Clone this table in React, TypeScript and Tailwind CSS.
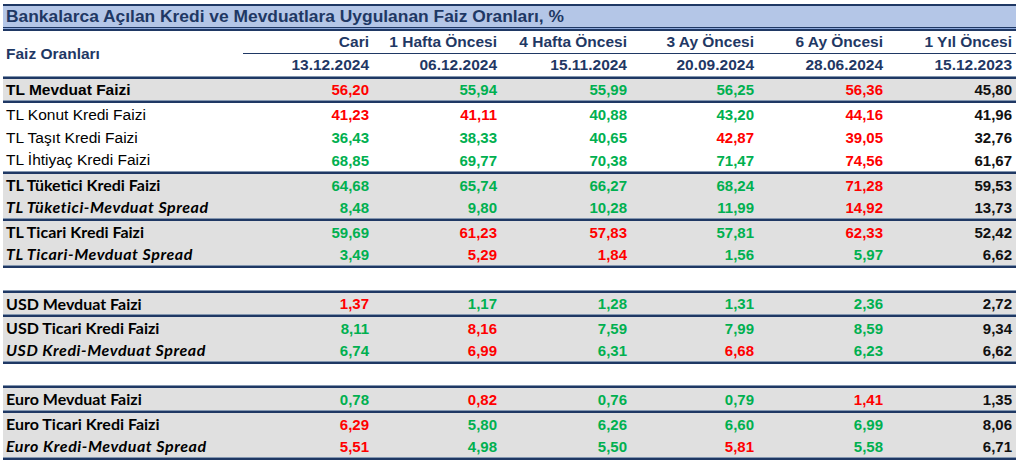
import React from "react";

type C = "r" | "g" | "k";

interface Row {
  label: string;
  font: "arialBold" | "arial" | "cal" | "calItalic";
  gray: boolean;
  h: string;
  vals: [string, C][];
}

const COLS = ["Cari", "1 Hafta Öncesi", "4 Hafta Öncesi", "3 Ay Öncesi", "6 Ay Öncesi", "1 Yıl Öncesi"];
const DATES = ["13.12.2024", "06.12.2024", "15.11.2024", "20.09.2024", "28.06.2024", "15.12.2023"];
const WIDTHS = ["w-[130px]", "w-[128px]", "w-[130px]", "w-[127px]", "w-[129px]", "w-[129px]"];

const colorClass: Record<C, string> = {
  r: "text-[#ff0000]",
  g: "text-[#00b050]",
  k: "text-[#111111]",
};

const labelClass = {
  arialBold: "font-['Liberation_Sans',Arial,sans-serif] font-bold text-[15.5px] text-black",
  arial: "font-['Liberation_Sans',Arial,sans-serif] text-[15.5px] text-black",
  cal: "font-['Lato',sans-serif] font-bold text-[16px] text-black",
  calItalic: "font-['Lato',sans-serif] font-bold italic text-[16px] tracking-[0.55px] text-black",
};

const v = (s: string): [string, C][] =>
  s.split(" ").map((t) => [t.slice(0, -1), t.slice(-1) as C]);

const groups: Row[][] = [
  [{ label: "TL Mevduat Faizi", font: "arialBold", gray: true, h: "h-[21px]", vals: v("56,20r 55,94g 55,99g 56,25g 56,36r 45,80k") }],
  [
    { label: "TL Konut Kredi Faizi", font: "arial", gray: false, h: "h-[23px]", vals: v("41,23r 41,11r 40,88g 43,20g 44,16r 41,96k") },
    { label: "TL Taşıt Kredi Faizi", font: "arial", gray: false, h: "h-[23px]", vals: v("36,43g 38,33g 40,65g 42,87r 39,05r 32,76k") },
    { label: "TL İhtiyaç Kredi Faizi", font: "arial", gray: false, h: "h-[22px]", vals: v("68,85g 69,77g 70,38g 71,47g 74,56r 61,67k") },
  ],
  [
    { label: "TL Tüketici Kredi Faizi", font: "cal", gray: true, h: "h-[22px]", vals: v("64,68g 65,74g 66,27g 68,24g 71,28r 59,53k") },
    { label: "TL Tüketici-Mevduat Spread", font: "calItalic", gray: true, h: "h-[22px]", vals: v("8,48g 9,80g 10,28g 11,99g 14,92r 13,73k") },
  ],
  [
    { label: "TL Ticari Kredi Faizi", font: "cal", gray: true, h: "h-[22px]", vals: v("59,69g 61,23r 57,83r 57,81g 62,33r 52,42k") },
    { label: "TL Ticari-Mevduat Spread", font: "calItalic", gray: true, h: "h-[22px]", vals: v("3,49g 5,29r 1,84r 1,56g 5,97g 6,62k") },
  ],
];

const usd: Row[][] = [
  [{ label: "USD Mevduat Faizi", font: "cal", gray: true, h: "h-[21px]", vals: v("1,37r 1,17g 1,28g 1,31g 2,36g 2,72k") }],
  [
    { label: "USD Ticari Kredi Faizi", font: "cal", gray: true, h: "h-[22px]", vals: v("8,11g 8,16r 7,59g 7,99g 8,59g 9,34k") },
    { label: "USD Kredi-Mevduat Spread", font: "calItalic", gray: true, h: "h-[22px]", vals: v("6,74g 6,99r 6,31g 6,68r 6,23g 6,62k") },
  ],
];

const euro: Row[][] = [
  [{ label: "Euro Mevduat Faizi", font: "cal", gray: true, h: "h-[22px]", vals: v("0,78g 0,82r 0,76g 0,79g 1,41r 1,35k") }],
  [
    { label: "Euro Ticari Kredi Faizi", font: "cal", gray: true, h: "h-[22px]", vals: v("6,29r 5,80g 6,26g 6,60g 6,99g 8,06k") },
    { label: "Euro Kredi-Mevduat Spread", font: "calItalic", gray: true, h: "h-[22px]", vals: v("5,51r 4,98g 5,50g 5,81r 5,58g 6,71k") },
  ],
];

function Line() {
  return <div className="h-[3px] border-t border-t-[#8497b0] border-b-2 border-b-[#1f3864]" />;
}

function DataRow({ row }: { row: Row }) {
  return (
    <div className={`flex items-center ${row.h} ${row.gray ? "bg-[#e0e0e0]" : "bg-white"}`}>
      <div className={`w-[240px] pl-[3px] leading-none whitespace-nowrap ${labelClass[row.font]}`}>{row.label}</div>
      {row.vals.map(([n, c], i) => (
        <div
          key={i}
          className={`${WIDTHS[i]} pr-[4px] text-right font-['Liberation_Sans',Arial,sans-serif] font-bold text-[15px] leading-none ${colorClass[c]}`}
        >
          {n}
        </div>
      ))}
    </div>
  );
}

function Block({ rows }: { rows: Row[][] }) {
  return (
    <>
      {rows.map((g, gi) => (
        <React.Fragment key={gi}>
          <Line />
          {g.map((r) => (
            <DataRow key={r.label} row={r} />
          ))}
        </React.Fragment>
      ))}
      <Line />
    </>
  );
}

export default function App() {
  return (
    <div className="w-[1024px] h-[461px] bg-white pt-[4px] pl-[3px] overflow-hidden">
      <div className="w-[1013px] flex flex-col">
        <div className="h-[2px] bg-[#1f3864]" />
        <div className="h-[21px] bg-[#b4c6e7] flex items-center pl-[3px]">
          <span className="font-['Liberation_Sans',Arial,sans-serif] font-bold text-[17.4px] leading-none text-[#1f3864] whitespace-nowrap">
            Bankalarca Açılan Kredi ve Mevduatlara Uygulanan Faiz Oranları, %
          </span>
        </div>
        <div className="h-[4px] bg-[#8ea9db] border-t border-b-2 border-[#1f3864]" />

        <div className="flex font-['Liberation_Sans',Arial,sans-serif] font-bold text-[#1f3864]">
          <div className="w-[240px] pl-[3px] flex items-center text-[15.5px] leading-none">Faiz Oranları</div>
          <div className="flex flex-col">
            <div className="flex h-[23px] items-center border-b border-[#1f3864]">
              {COLS.map((c, i) => (
                <div key={c} className={`${WIDTHS[i]} pr-[4px] text-right text-[15.5px] leading-none whitespace-nowrap`}>
                  {c}
                </div>
              ))}
            </div>
            <div className="flex h-[22px] items-center">
              {DATES.map((d, i) => (
                <div key={d} className={`${WIDTHS[i]} pr-[4px] text-right text-[15.5px] leading-none`}>
                  {d}
                </div>
              ))}
            </div>
          </div>
        </div>

        <Block rows={groups} />
        <div className="h-[22px] bg-white" />
        <Block rows={usd} />
        <div className="h-[21px] bg-white" />
        <Block rows={euro} />
      </div>
    </div>
  );
}
